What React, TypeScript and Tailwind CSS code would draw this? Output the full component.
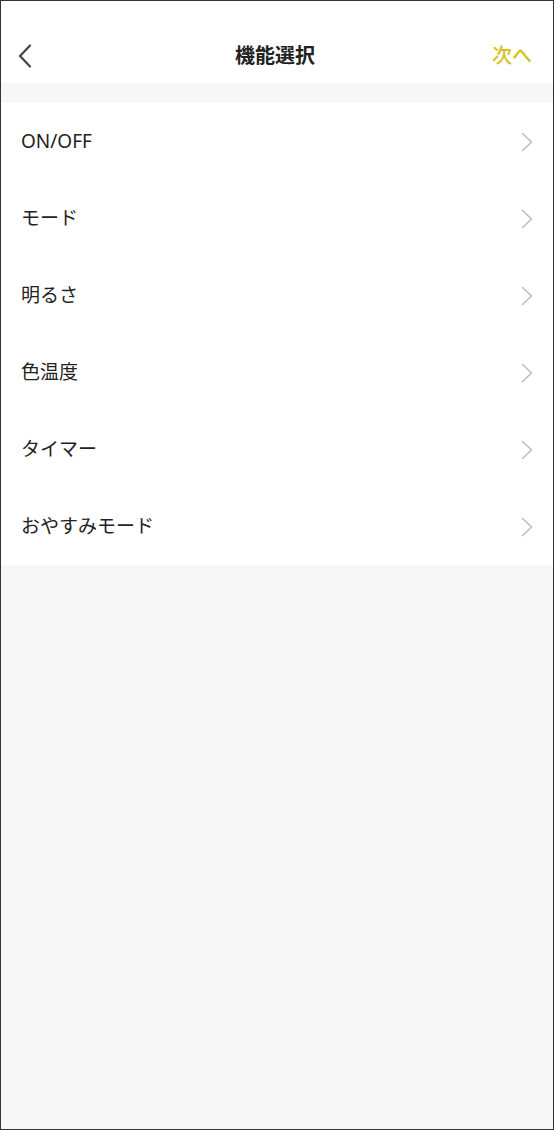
const items = ["ON/OFF", "モード", "明るさ", "色温度", "タイマー", "おやすみモード"];

const font = { fontFamily: '"Noto Sans", "Noto Sans CJK JP", sans-serif' };

export default function App() {
  return (
    <div
      className="w-[554px] h-[1130px] border border-[#333] bg-[#f7f7f7] flex flex-col"
      style={font}
    >
      <header className="h-[82px] bg-white flex items-end pb-[9px] pl-[17px] pr-[21px]">
        <div className="flex-1 grid grid-cols-3 items-center h-[36px]">
          <svg width="14" height="24" viewBox="0 0 14 24" fill="none">
            <path d="M12 1.5 2 12l10 10.5" stroke="#444" strokeWidth="2.2" strokeLinecap="round" strokeLinejoin="round" />
          </svg>
          <h1 className="text-[20px] font-bold text-[#222] leading-none text-center">機能選択</h1>
          <span className="text-[20px] font-medium text-[#d7c21c] leading-none text-right">次へ</span>
        </div>
      </header>
      <div className="h-[20px]" />
      <ul className="bg-white">
        {items.map((label) => (
          <li key={label} className="h-[77px] flex items-center justify-between pl-[20px] pr-[20px]">
            <span className="text-[19px] text-[#222] leading-none">{label}</span>
            <svg width="12" height="20" viewBox="0 0 12 20" fill="none">
              <path d="M1.5 1.5 10.5 10l-9 8.5" stroke="#bdbdbd" strokeWidth="1.6" strokeLinecap="round" strokeLinejoin="round" />
            </svg>
          </li>
        ))}
      </ul>
    </div>
  );
}
